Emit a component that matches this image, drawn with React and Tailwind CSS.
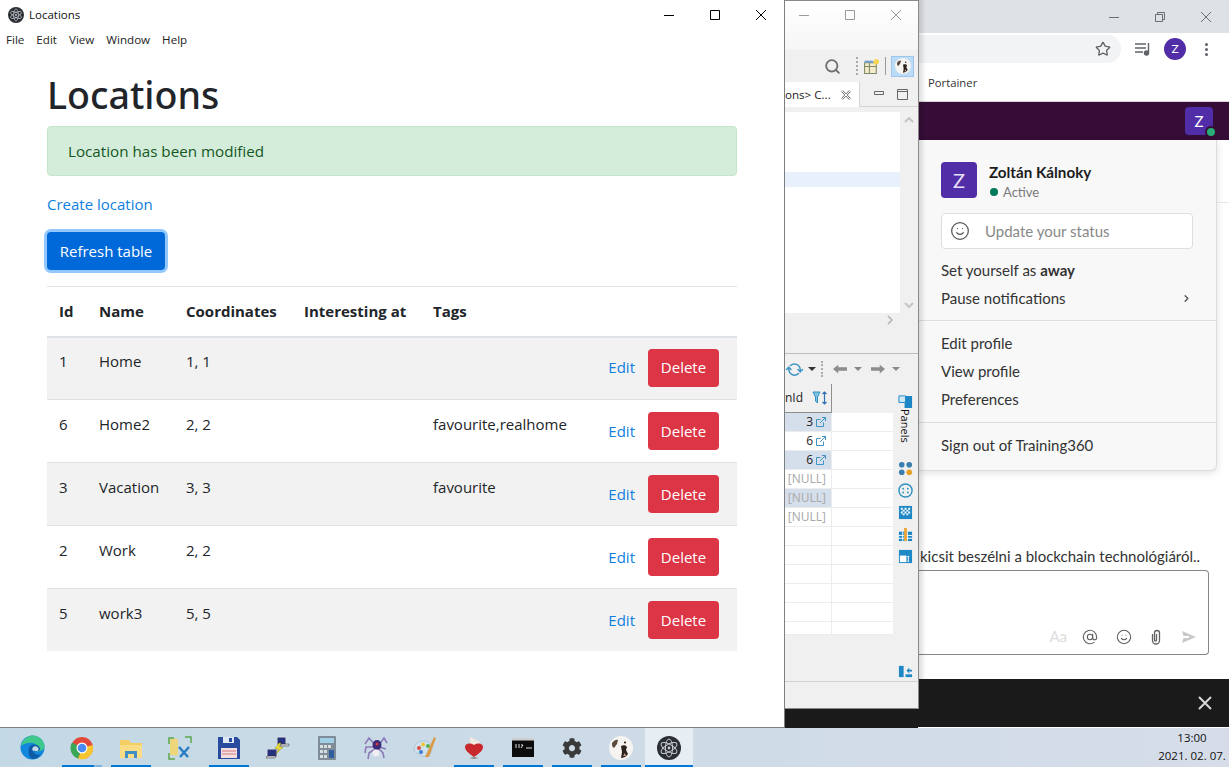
import { Search, Star, Smile, AtSign, ChevronRight, RefreshCw } from "lucide-react";
import { FaCog } from "react-icons/fa";

const segoe = { fontFamily: '"Open Sans", "Noto Sans", sans-serif' };

const rows = [
  { id: 1, name: "Home", coords: "1, 1", tags: "" },
  { id: 6, name: "Home2", coords: "2, 2", tags: "favourite,realhome" },
  { id: 3, name: "Vacation", coords: "3, 3", tags: "favourite" },
  { id: 2, name: "Work", coords: "2, 2", tags: "" },
  { id: 5, name: "work3", coords: "5, 5", tags: "" },
];

// window buttons, drawn thin like Windows 10
function WinButtons({ color = "#000", restore = false, gap = "gap-[32px]", size = 14 }) {
  return (
    <div className={`flex items-center ${gap}`}>
      <svg width={size} height={size} viewBox="0 0 14 14" fill="none" stroke={color}><path d="M2 7.500h10" /></svg>
      {restore ? (
        <svg width={size} height={size} viewBox="0 0 14 14" fill="none" stroke={color}><path d="M2.500 4.500h7v7h-7zM4.500 4.500v-2h7v7h-2" /></svg>
      ) : (
        <svg width={size} height={size} viewBox="0 0 14 14" fill="none" stroke={color}><path d="M2.500 2.500h9v9h-9z" /></svg>
      )}
      <svg width={size} height={size} viewBox="0 0 14 14" fill="none" stroke={color}><path d="M2 2l10 10M12 2L2 12" /></svg>
    </div>
  );
}

function ElectronLogo({ size = 16 }) {
  return (
    <svg width={size} height={size} viewBox="0 0 24 24" fill="none">
      <circle cx="12" cy="12" r="12" fill="#2b2e33" />
      <g stroke="#c5ccd2" strokeWidth="1">
        <ellipse cx="12" cy="12" rx="9" ry="3.600" transform="rotate(30 12 12)" />
        <ellipse cx="12" cy="12" rx="9" ry="3.600" transform="rotate(90 12 12)" />
        <ellipse cx="12" cy="12" rx="9" ry="3.600" transform="rotate(150 12 12)" />
      </g>
      <circle cx="12" cy="12" r="1.400" fill="#c5ccd2" />
    </svg>
  );
}

function DogLogo({ size = 22 }) {
  return (
    <svg width={size} height={size} viewBox="0 0 24 24">
      <circle cx="12" cy="12" r="12" fill="#f6f4f0" />
      <path d="M3 7c2-3 5-4 6-3l-1 4-3 4c-2-1-2-3-2-5z" fill="#5a4a3e" />
      <path d="M12 10c2-1 5-1 6 1l-1 3 2 4c-2 3-5 4-7 4l1-6z" fill="#2c221c" />
      <path d="M14 20l2-3 1 3z" fill="#c9a08a" />
      <circle cx="16" cy="6.500" r="1.100" fill="#2c221c" />
    </svg>
  );
}

function AppWindow() {
  return (
    <div style={segoe} className="absolute left-0 top-0 z-30 flex h-[728px] w-[785px] flex-col border-r border-b border-[#7d7f81] bg-white text-[#212529]">
      <div className="flex h-[30px] shrink-0 items-center justify-between pl-2 pr-[16px]">
        <div className="flex items-center gap-[5px] text-[11.5px] text-[#111]">
          <ElectronLogo />
          <span>Locations</span>
        </div>
        <WinButtons />
      </div>
      <nav className="flex h-[20px] shrink-0 items-center gap-[12px] pl-[6px] text-[11.6px] text-[#222]">
        <span>File</span><span>Edit</span><span>View</span><span>Window</span><span>Help</span>
      </nav>
      <main className="flex flex-col px-[47px] text-[15px]">
        <h1 style={{ fontFamily: '"Noto Sans", sans-serif' }} className="mt-[21px] h-[48px] text-[37.6px] leading-[48px] font-medium">Locations</h1>
        <div className="mt-[7px] flex h-[50px] items-center rounded border border-[#c3e6cb] bg-[#d4edda] px-[20px] text-[15.2px] text-[#155724]">
          Location has been modified
        </div>
        <a className="mt-[16px] leading-[24px] text-[#0f7fe0]">Create location</a>
        <div className="mt-[16px]">
          <button className="h-[38px] w-[118px] rounded bg-[#0069d9] text-white shadow-[0_0_0_3px_rgba(38,143,255,0.5)]">Refresh table</button>
        </div>
        <table className="mt-[16px] w-full table-fixed border-collapse text-left">
          <colgroup>
            <col className="w-[40px]" /><col className="w-[87px]" /><col className="w-[118px]" /><col className="w-[129px]" /><col className="w-[170px]" /><col />
          </colgroup>
          <thead>
            <tr className="h-[50px] border-t border-b-2 border-[#dee2e6] font-bold">
              <th className="px-3">Id</th><th className="px-3">Name</th><th className="px-3">Coordinates</th><th className="px-3 whitespace-nowrap">Interesting at</th><th className="px-3">Tags</th><th></th>
            </tr>
          </thead>
          <tbody>
            {rows.map((r, i) => {
              const textTop = i === 0 ? "pt-3" : "pt-[13px]";
              return (
                <tr key={r.id} className={`border-t border-[#dee2e6] ${i === rows.length - 1 ? "h-[62px]" : "h-[63px]"} ${i % 2 === 0 ? "bg-[#f2f2f2]" : ""}`}>
                  <td className={`px-3 align-top ${textTop}`}>{r.id}</td>
                  <td className={`px-3 align-top ${textTop}`}>{r.name}</td>
                  <td className={`px-3 align-top ${textTop}`}>{r.coords}</td>
                  <td></td>
                  <td className={`px-3 align-top whitespace-nowrap ${textTop}`}>{r.tags}</td>
                  <td className={`pr-[18px] align-top ${i === 0 ? "pt-[11px]" : "pt-3"}`}>
                    <div className="flex items-center justify-end gap-[13px]">
                      <a className="text-[#0f7fe0]">Edit</a>
                      <button className="h-[38px] w-[71px] rounded bg-[#dc3545] text-white">Delete</button>
                    </div>
                  </td>
                </tr>
              );
            })}
          </tbody>
        </table>
      </main>
    </div>
  );
}

function SideIcon({ children }) {
  return <svg width="15" height="15" viewBox="0 0 16 16" className="shrink-0">{children}</svg>;
}

function DbWindow() {
  const gridRows = [
    { v: "3", b: "bg-[#d5dfeb]", link: true },
    { v: "6", b: "bg-white", link: true },
    { v: "6", b: "bg-[#d5dfeb]", link: true },
    { v: "[NULL]", b: "bg-white" },
    { v: "[NULL]", b: "bg-[#d5dfeb]" },
    { v: "[NULL]", b: "bg-white" },
    { v: "", b: "bg-white" }, { v: "", b: "bg-white" }, { v: "", b: "bg-white" },
    { v: "", b: "bg-white" }, { v: "", b: "bg-white" }, { v: "", b: "bg-white", h: "h-[13px]" },
  ];
  return (
    <div style={segoe} className="absolute left-[785px] top-0 z-20 flex h-[709px] w-[134px] flex-col overflow-hidden border-t border-r border-b border-[#8a8a8a] bg-[#f0f0f0] text-[#222]">
      <div className="flex h-[49px] shrink-0 items-start justify-end bg-gradient-to-b from-white to-[#f6f6f6] pr-[15px] pt-[7px]">
        <WinButtons color="#9a9a9a" gap="gap-[32px]" />
      </div>
      <div className="flex h-[32px] shrink-0 items-center pl-[39px]">
        <Search size={17} strokeWidth={2.6} className="text-[#6e6e6e]" />
        <div className="ml-[15px] h-[18px] w-[3px] border-l-2 border-dotted border-[#aaa]" />
        <svg width="17" height="17" viewBox="0 0 16 16" className="ml-[4px]"><path d="M1.500 4.500h11v10h-11z" fill="#f4ecc8" stroke="#7d8a6a" /><path d="M1.500 8h11M6 4.500v10" stroke="#7d8a6a" /><path d="M1.500 2.500h8v2h-8z" fill="#6f9fd0" /><circle cx="12.500" cy="3.500" r="2.500" fill="#f6d350" /></svg>
        <div className="ml-[5px] h-[18px] w-px bg-[#999]" />
        <div className="ml-[5px] flex h-[21px] w-[23px] items-center justify-center border border-[#9cc6ee] bg-[#bcdcf6]">
          <DogLogo size={16} />
        </div>
      </div>
      <div className="flex h-[25px] shrink-0 items-stretch">
        <div className="flex w-[75px] items-center justify-between border-r border-[#d4d4d4] bg-white pr-[7px] text-[11.6px] whitespace-nowrap">
          <span className="w-[50px] overflow-hidden">ons&gt; C...</span>
          <svg width="12" height="12" viewBox="0 0 12 12" fill="none"><path d="M2 2l8 8M10 2l-8 8" stroke="#777" strokeWidth="2.400" /><path d="M2 2l8 8M10 2l-8 8" stroke="#fff" strokeWidth="1" /></svg>
        </div>
        <div className="flex flex-1 items-center justify-end gap-[13px] border-b border-[#d4d4d4] pr-[10px]">
          <svg width="10" height="10" viewBox="0 0 10 10" fill="none" stroke="#666"><path d="M.5 2.500h9v3h-9z" /></svg>
          <svg width="11" height="11" viewBox="0 0 11 11" fill="none" stroke="#666"><path d="M.5.5h10v10H.5zM.5 2.500h10" /></svg>
        </div>
      </div>
      <div className="mt-[5px] flex h-[201px] shrink-0">
        <div className="w-[115px] bg-white pt-[60px]">
          <div className="h-[15px] bg-[#e8f0fb]" />
        </div>
        <div className="flex flex-1 flex-col items-center justify-between py-[5px] text-[#c4c4c4]">
          <svg width="10" height="6" viewBox="0 0 10 6" fill="none" stroke="currentColor" strokeWidth="2"><path d="M1 5l4-4 4 4" /></svg>
          <svg width="10" height="6" viewBox="0 0 10 6" fill="none" stroke="currentColor" strokeWidth="2"><path d="M1 1l4 4 4-4" /></svg>
        </div>
      </div>
      <div className="flex h-[41px] shrink-0 justify-end border-b border-[#bdbdbd] pr-[25px] pt-[2px] text-[#bdbdbd]">
        <svg width="6" height="10" viewBox="0 0 6 10" fill="none" stroke="currentColor" strokeWidth="1.800"><path d="M1 1l4 4-4 4" /></svg>
      </div>
      <div className="flex h-[30px] shrink-0 items-center pl-[2px]">
        <RefreshCw size={15} strokeWidth={2.4} className="rotate-45 text-[#3f94c4]" />
        <span className="ml-[6px] h-0 w-0 border-x-[4px] border-t-[4px] border-x-transparent border-t-[#333]" />
        <span className="ml-[5px] h-[16px] border-l-2 border-dotted border-[#aaa]" />
        <svg width="14" height="10" viewBox="0 0 16 10" fill="#8c8c8c" className="ml-[10px]"><path d="M0 5l6-5v3h10v4H6v3z" /></svg>
        <span className="ml-[7px] h-0 w-0 border-x-[4px] border-t-[4px] border-x-transparent border-t-[#888]" />
        <svg width="14" height="10" viewBox="0 0 16 10" fill="#8c8c8c" className="ml-[9px]"><path d="M16 5l-6-5v3H0v4h10v3z" /></svg>
        <span className="ml-[7px] h-0 w-0 border-x-[4px] border-t-[4px] border-x-transparent border-t-[#888]" />
      </div>
      <div className="flex min-h-0 flex-1">
        <div className="flex w-[108px] shrink-0 flex-col">
          <div className="flex h-[29px] shrink-0">
            <div className="flex w-[47px] items-center justify-between border-r border-b border-[#8e8e8e] pr-[3px] text-[12px] font-medium">
              <span className="whitespace-nowrap">nId</span>
              <svg width="16" height="14" viewBox="0 0 16 14" fill="none"><path d="M1 1h7L5.500 6v6L3.500 10V6z" fill="#7fc4e0" stroke="#2f8fc0" /><path d="M12.500 1v12M10.500 3l2-2 2 2M10.500 11l2 2 2-2" stroke="#2f6fb0" strokeWidth="1.200" /></svg>
            </div>
            <div className="flex-1" />
          </div>
          {gridRows.map((g, i) => (
            <div key={i} className={`flex shrink-0 border-b border-[#ececec] text-[12px] ${g.h || "h-[19px]"}`}>
              <div className={`flex w-[47px] items-center justify-end gap-[3px] border-r border-[#ececec] pr-[5px] ${g.b} ${g.link ? "" : "text-[#a8a8a8]"}`}>
                {g.v}
                {g.link && (
                  <svg width="10" height="10" viewBox="0 0 10 10" fill="none" stroke="#3f94c4"><path d="M7.500 5.500v4h-7v-7h4M4 6l5.500-5.500M6 .5h3.500V4" /></svg>
                )}
              </div>
              <div className="flex-1 bg-white" />
            </div>
          ))}
        </div>
        <div className="relative flex flex-1 flex-col items-center pt-[10px]">
          <SideIcon><path d="M1 2h14v13H7V9H1z" fill="#1e88c7" /><path d="M1 2h7v7H1z" fill="#cfe8f6" stroke="#1e88c7" /></SideIcon>
          <span className="h-[34px] text-[11px] leading-none text-[#111] [writing-mode:vertical-rl]">Panels</span>
          <div className="mt-[18px] flex flex-col items-center gap-[7px]">
            <SideIcon><circle cx="4" cy="4" r="3" fill="#3a7fb0" /><circle cx="12" cy="4" r="3" fill="#3a7fb0" /><circle cx="4" cy="12" r="3" fill="#3a7fb0" /><circle cx="12" cy="12" r="3" fill="#e8a020" /></SideIcon>
            <SideIcon><circle cx="8" cy="8" r="7" fill="none" stroke="#2f8fc0" strokeWidth="1.500" /><circle cx="5.500" cy="6" r="1" fill="#2f8fc0" /><circle cx="10.500" cy="6" r="1" fill="#2f8fc0" /><circle cx="5.500" cy="10" r="1" fill="#2f8fc0" /><circle cx="10.500" cy="10" r="1" fill="#2f8fc0" /></SideIcon>
            <SideIcon><rect x="1" y="1" width="14" height="14" fill="#1e88c7" /><path d="M3 3h2v2H3zM7 3h2v2H7zM11 3h2v2h-2zM5 5h2v2H5zM9 5h2v2H9zM3 7h2v2H3zM7 7h2v2H7zM11 7h2v2h-2zM5 9h2v2H5zM9 9h2v2H9z" fill="#fff" /></SideIcon>
            <SideIcon><rect x="1" y="5" width="14" height="10" fill="#1e88c7" /><path d="M1 9h14M1 12h14M5 5v10M10 5v10" stroke="#fff" /><rect x="6.500" y="1" width="3" height="14" fill="#eea63a" /></SideIcon>
            <SideIcon><rect x="1" y="1" width="14" height="14" fill="#1e88c7" /><path d="M2 7h7v7H2z" fill="#fff" /><path d="M11 8v5M10 8h2M10 13h2" stroke="#fff" /></SideIcon>
          </div>
          <div className="absolute top-[280px]">
            <SideIcon><path d="M1 2h5v12H1z" fill="#1e88c7" /><path d="M8 14h7v-3H8z" fill="#1e88c7" /><path d="M9 7l3-3v2h3v2h-3v2z" fill="#1e88c7" /></SideIcon>
          </div>
        </div>
      </div>
      <div className="h-px shrink-0 bg-[#d0d0d0]" />
      <div className="h-[26px] shrink-0" />
    </div>
  );
}

function ChromeWindow() {
  const item = "h-[28px] leading-[28px]";
  return (
    <div style={{ fontFamily: "Lato, sans-serif" }} className="absolute left-[918px] top-0 z-10 flex h-[728px] w-[311px] flex-col bg-white text-[15px] text-[#333]">
      <div className="absolute left-0 top-0 z-10 h-[679px] w-[8px] bg-gradient-to-r from-black/15 to-transparent" />
      <div className="flex h-[33px] shrink-0 items-center justify-end bg-[#dee1e6] pr-[16px]">
        <WinButtons color="#6b6e72" restore gap="gap-[32px]" />
      </div>
      <div className="flex h-[32px] shrink-0 items-center">
        <div className="flex h-[28px] w-[203px] items-center justify-end rounded-r-full bg-[#f1f3f4] pr-[10px]">
          <Star size={16} className="text-[#5f6368]" />
        </div>
        <svg width="18" height="14" viewBox="0 0 18 14" className="ml-[13px]" fill="none" stroke="#5f6368" strokeWidth="1.400"><path d="M1 2h11M1 6h11M1 10h8" /><path d="M14.500 1v9.500" /><circle cx="12.500" cy="11" r="2" fill="#5f6368" /></svg>
        <div className="ml-[12px] flex h-[22px] w-[22px] items-center justify-center rounded-full bg-[#512da8] text-[12px] text-white">Z</div>
        <div className="ml-[19px] flex flex-col gap-[2px]">
          <span className="h-[3px] w-[3px] rounded-full bg-[#5f6368]" /><span className="h-[3px] w-[3px] rounded-full bg-[#5f6368]" /><span className="h-[3px] w-[3px] rounded-full bg-[#5f6368]" />
        </div>
      </div>
      <div className="flex h-[37px] shrink-0 items-center border-b border-[#d8d4d8] pl-[10px] text-[11.3px] text-[#333]" style={segoe}>Portainer</div>
      <div className="relative h-[38px] shrink-0 bg-[#350d36]">
        <div className="absolute left-[267px] top-[5px] flex h-[28px] w-[28px] items-center justify-center rounded bg-[#512da8] text-[15px] text-white">Z</div>
        <span className="absolute left-[287px] top-[24px] h-[12px] w-[12px] rounded-full border-2 border-[#350d36] bg-[#2bac76]" />
      </div>
      <div className="relative min-h-0 flex-1">
        <div className="absolute -right-px left-0 top-[62px] h-px bg-[#e8e8e8]" />
        <div className="absolute left-0 top-0 flex h-[331px] w-[299px] flex-col rounded-br-md border-r border-b border-[#dcdcdc] bg-[#f8f8f8] shadow-[0_2px_8px_rgba(0,0,0,0.12)]">
          <div className="flex h-[73px] shrink-0 items-start gap-[12px] pl-[23px] pt-[22px]">
            <div className="flex h-[36px] w-[36px] items-center justify-center rounded bg-[#512da8] text-[20px] text-[#e8e0f8]">Z</div>
            <div>
              <div className="text-[15.2px] leading-[20px] font-bold text-[#1d1c1d]">Zoltán Kálnoky</div>
              <div className="flex items-center gap-[5px] pl-px text-[13px] leading-[20px] text-[#7a7a7a]">
                <span className="h-[8px] w-[8px] rounded-full bg-[#007a5a]" />Active
              </div>
            </div>
          </div>
          <div className="mx-[23px] flex h-[36px] shrink-0 items-center rounded border border-[#dedede] bg-white pl-[8px] text-[#888]">
            <Smile size={20} strokeWidth={1.500} className="text-[#555]" />
            <span className="ml-[15px]">Update your status</span>
          </div>
          <div className="px-[23px] pt-[7px]">
            <div className={item}>Set yourself as <b className="font-bold">away</b></div>
            <div className={`${item} flex items-center justify-between pr-[1px]`}>Pause notifications <ChevronRight size={11} strokeWidth={3} className="text-[#555]" /></div>
          </div>
          <div className="mt-[8px] h-px bg-[#dddddd]" />
          <div className="px-[23px] pt-[8px]">
            <div className={item}>Edit profile</div>
            <div className={item}>View profile</div>
            <div className={item}>Preferences</div>
          </div>
          <div className="mt-[9px] h-px bg-[#dddddd]" />
          <div className={`${item} box-content px-[23px] pt-[8px]`}>Sign out of Training360</div>
        </div>
        <div className="mt-[404px] h-[24px] whitespace-nowrap pl-[2px] leading-[24px] text-[#333]">kicsit beszélni a blockchain technológiáról..</div>
        <div className="mt-[2px] flex h-[85px] w-[291px] items-end justify-end rounded-r border border-l-0 border-[#868686] pb-[9px] pr-[11px] text-[#616061]">
          <span className="mr-[15px] text-[15px] leading-[18px] text-[#dddddd]">Aa</span>
          <AtSign size={16} strokeWidth={1.600} />
          <Smile size={16} strokeWidth={1.600} className="ml-[18px]" />
          <svg width="16" height="16" viewBox="0 0 16 16" fill="none" stroke="currentColor" strokeWidth="1.300" className="ml-[16px]"><path d="M4.500 5v6.500a3.500 3.500 0 0 0 7 0V4a2.500 2.500 0 0 0-5 0v7a1 1 0 0 0 2 0V5" /></svg>
          <svg width="16" height="16" viewBox="0 0 16 16" fill="#c8c8c8" className="ml-[17px]"><path d="M1 2l14 6-14 6 1.500-5H8V7H2.500z" /></svg>
        </div>
        <div className="mt-[24px] flex h-[48px] items-center justify-end bg-[#1a1a1a] pr-[16px]">
          <svg width="16" height="16" viewBox="0 0 16 16" stroke="#d8d8d8" strokeWidth="2"><path d="M2 2l12 12M14 2L2 14" /></svg>
        </div>
      </div>
    </div>
  );
}

const Slot = ({ active, on, part, children }) => (
  <div className={`relative flex h-[39px] items-center justify-center ${active ? "w-[48px] bg-white/50" : "w-[49px]"}`}>
    {children}
    {on && <span className={`absolute bottom-0 h-[2px] ${active ? "w-[48px]" : "w-[40px]"} bg-[#0078d7]`} />}
    {part && <span className="absolute bottom-0 right-[4px] h-[2px] w-[8px] bg-[#7cb4dd]" />}
  </div>
);

function Taskbar() {
  return (
    <div style={segoe} className="flex h-[39px] shrink-0 items-stretch justify-between bg-gradient-to-r from-[#c3d9e5] to-[#d6dde9] pl-[8px] pr-[6px] shadow-[0_-1px_0_rgba(0,0,0,0.3)]">
      <div className="flex items-center">
        <Slot>
          <svg width="25" height="25" viewBox="0 0 26 26">
            <circle cx="13" cy="13" r="12.500" fill="#1488dc" />
            <path d="M1 11C3 3 10 .5 13 .5c7 0 12.500 6 12.500 11 0 4-4 6-8 5.500 2-2 2-6-2-8-5-2-10 0-14.500 2z" fill="#3ec88c" />
            <path d="M9 15c0-3 3-5 6-5 4 0 6 3 6 5-2 3-6 2-8 1 1 3 5 6 9 4-3 4-6 5-9 5-4-2-4-6-4-10z" fill="#0e5aa6" />
            <path d="M13 16c-1-3 2-5 4-4 3 1 3 4 1 5z" fill="#c3d9e5" />
          </svg>
        </Slot>
        <Slot on part>
          <svg width="24" height="24" viewBox="0 0 24 24">
            <circle cx="12" cy="12" r="11" fill="#e14a3b" />
            <path d="M12 12L22.500 9A11 11 0 0 1 8 22.500z" fill="#f6c52f" />
            <path d="M12 12L8 22.500A11 11 0 0 1 2 6.500z" fill="#3aa757" />
            <circle cx="12" cy="12" r="5.500" fill="#fff" /><circle cx="12" cy="12" r="4.300" fill="#4a8af4" />
          </svg>
        </Slot>
        <Slot on>
          <svg width="24" height="22" viewBox="0 0 24 22">
            <path d="M1 3h9l2 3h11v15H1z" fill="#f5ce63" /><path d="M1 8h22v13H1z" fill="#f9dd85" />
            <path d="M6 14h12v7h-3v-4H9v4H6z" fill="#3f8fc8" />
          </svg>
        </Slot>
        <Slot>
          <svg width="24" height="24" viewBox="0 0 24 24">
            <path d="M2 4c0-2 8-2 8 0v14c0 2-8 2-8 0z" fill="#eed67a" />
            <path d="M1 8V2h5M17 1h6v6M1 17v6h6" stroke="#5ca64a" strokeWidth="1.500" fill="none" />
            <path d="M11 11l9 10M21 11l-9 10" stroke="#2a7cc0" strokeWidth="2.500" />
          </svg>
        </Slot>
        <Slot on>
          <svg width="24" height="24" viewBox="0 0 24 24">
            <path d="M1 1h19l3 3v19H1z" fill="#2a4a9e" /><path d="M6 1h11v6H6z" fill="#dfe6f4" /><path d="M12 2h3v4h-3z" fill="#2a4a9e" />
            <path d="M4 12h16v10H4z" fill="#f3dfe0" /><path d="M5 15h14M5 18h14" stroke="#d77a80" />
          </svg>
        </Slot>
        <Slot>
          <svg width="24" height="24" viewBox="0 0 24 24">
            <path d="M11 1h9v8h-9z" fill="#26327e" stroke="#ddd" /><path d="M1 13h10v8H1z" fill="#26327e" stroke="#ddd" />
            <path d="M9 22H0l1-2h9zM23 10h-9l1-2h8z" fill="#d8d8d8" stroke="#333" strokeWidth="0.500" />
            <path d="M13 7l-4 6h4l-3 5 7-7h-4l2-4z" fill="#f5e23a" stroke="#7a6d00" strokeWidth="0.400" />
          </svg>
        </Slot>
        <Slot>
          <svg width="18" height="24" viewBox="0 0 18 24">
            <rect width="18" height="24" rx="1" fill="#7d8c96" /><path d="M2 2h14v5H2z" fill="#9fd0e6" />
            <path d="M2 9h3v3H2zM6 9h3v3H6zM2 14h3v3H2zM6 14h3v3H6zM2 19h3v3H2zM6 19h3v3H6zM10 9h3v3h-3z" fill="#d8dde0" /><path d="M11 14h5v8h-5z" fill="#2f5f9e" />
          </svg>
        </Slot>
        <Slot>
          <svg width="24" height="24" viewBox="0 0 24 24" fill="none">
            <path d="M11 9L5 2 1 8M11 11L2 11 1 17M11 13L5 17 4 23M15 9l5-7 3 5M15 11l7 2M15 13l4 4 1 5" stroke="#8d7ab8" strokeWidth="1.600" />
            <ellipse cx="13" cy="9" rx="4.500" ry="5" fill="#3c2a78" /><circle cx="13" cy="8" r="1.500" fill="#d03a3a" />
            <ellipse cx="12" cy="17" rx="3.500" ry="3.500" fill="#f0eef4" />
          </svg>
        </Slot>
        <Slot>
          <svg width="24" height="24" viewBox="0 0 24 24">
            <path d="M1 13C2 6 9 3 15 6c5 3 5 9 2 12-3 3-8 3-10 1-1-3-6-1-6-6z" fill="#cfe0ee" stroke="#9db5c6" strokeWidth="0.600" />
            <circle cx="6" cy="12" r="2" fill="#e0483a" /><circle cx="10" cy="8.500" r="2" fill="#f2c531" /><circle cx="15" cy="10" r="2" fill="#57b04d" /><circle cx="8" cy="16" r="2" fill="#3a7fd0" />
            <path d="M12 21L21 1l2 1-7 19z" fill="#d99a4a" />
          </svg>
        </Slot>
        <Slot on>
          <svg width="24" height="24" viewBox="0 0 24 24">
            <path d="M8 1l10 5-3 6H8z" fill="#f1ece2" />
            <path d="M12 21C6 17 3 14 3 11c0-3 4-5 9-2 5-3 9-1 9 2 0 3-3 6-9 10z" fill="#c9282d" />
            <path d="M7 22l5-1 5 1-5 1z" fill="#8a8a8a" />
          </svg>
        </Slot>
        <Slot on>
          <svg width="22" height="19" viewBox="0 0 22 19">
            <rect width="22" height="19" fill="#0c0c0c" /><rect width="22" height="2.500" fill="#cfcfcf" />
            <path d="M3 7h2M3 9h2M7 6v4M9 7h2l-2 3M14 10h6" stroke="#ddd" strokeWidth="1" />
          </svg>
        </Slot>
        <Slot on>
          <FaCog size={20} className="text-[#3a3a3a]" />
        </Slot>
        <Slot on>
          <DogLogo size={24} />
        </Slot>
        <Slot on active>
          <ElectronLogo size={24} />
        </Slot>
      </div>
      <div className="flex w-[62px] flex-col items-center justify-center pb-[2px] text-[11.500px] leading-[18px] text-[#111]">
        <span>13:00</span>
        <span className="whitespace-nowrap">2021. 02. 07.</span>
      </div>
    </div>
  );
}

export default function App() {
  return (
    <div className="flex h-[767px] w-[1229px] flex-col overflow-hidden bg-[#d4dce9]">
      <div className="relative h-[728px] shrink-0">
        <ChromeWindow />
        <div className="absolute left-[785px] top-[679px] h-[49px] w-[134px] bg-[#1a1a1a]" />
        <DbWindow />
        <AppWindow />
      </div>
      <Taskbar />
    </div>
  );
}
